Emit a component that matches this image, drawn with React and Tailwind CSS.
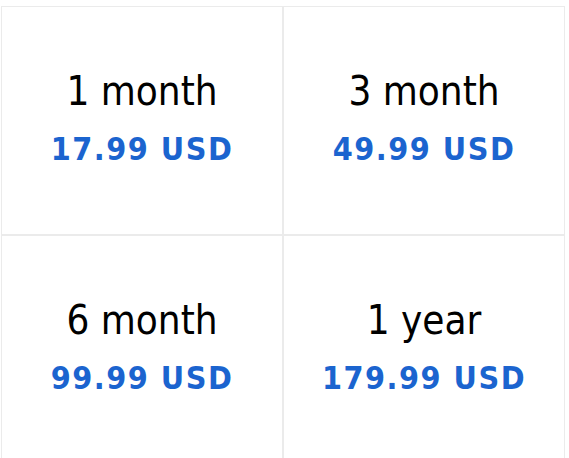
export default function App() {
  const plans = [
    { name: "1 month", price: "17.99 USD" },
    { name: "3 month", price: "49.99 USD" },
    { name: "6 month", price: "99.99 USD" },
    { name: "1 year", price: "179.99 USD" },
  ];
  return (
    <div className="bg-white w-[569px] h-[458px] overflow-hidden pt-[6px] pl-[1px]" style={{ fontFamily: '"DejaVu Sans Condensed", "DejaVu Sans", sans-serif' }}>
      <div className="grid grid-cols-2 w-[564px]">
        {plans.map((p) => (
          <div key={p.name} className="h-[229px] border border-[#ebebeb] flex flex-col items-center pt-[60px]">
            <div className="text-[40px] leading-[48px] text-black">{p.name}</div>
            <div className="mt-[14px] text-[32px] leading-[40px] font-bold tracking-[1.5px] text-[#1b64cf]">{p.price}</div>
          </div>
        ))}
      </div>
    </div>
  );
}
